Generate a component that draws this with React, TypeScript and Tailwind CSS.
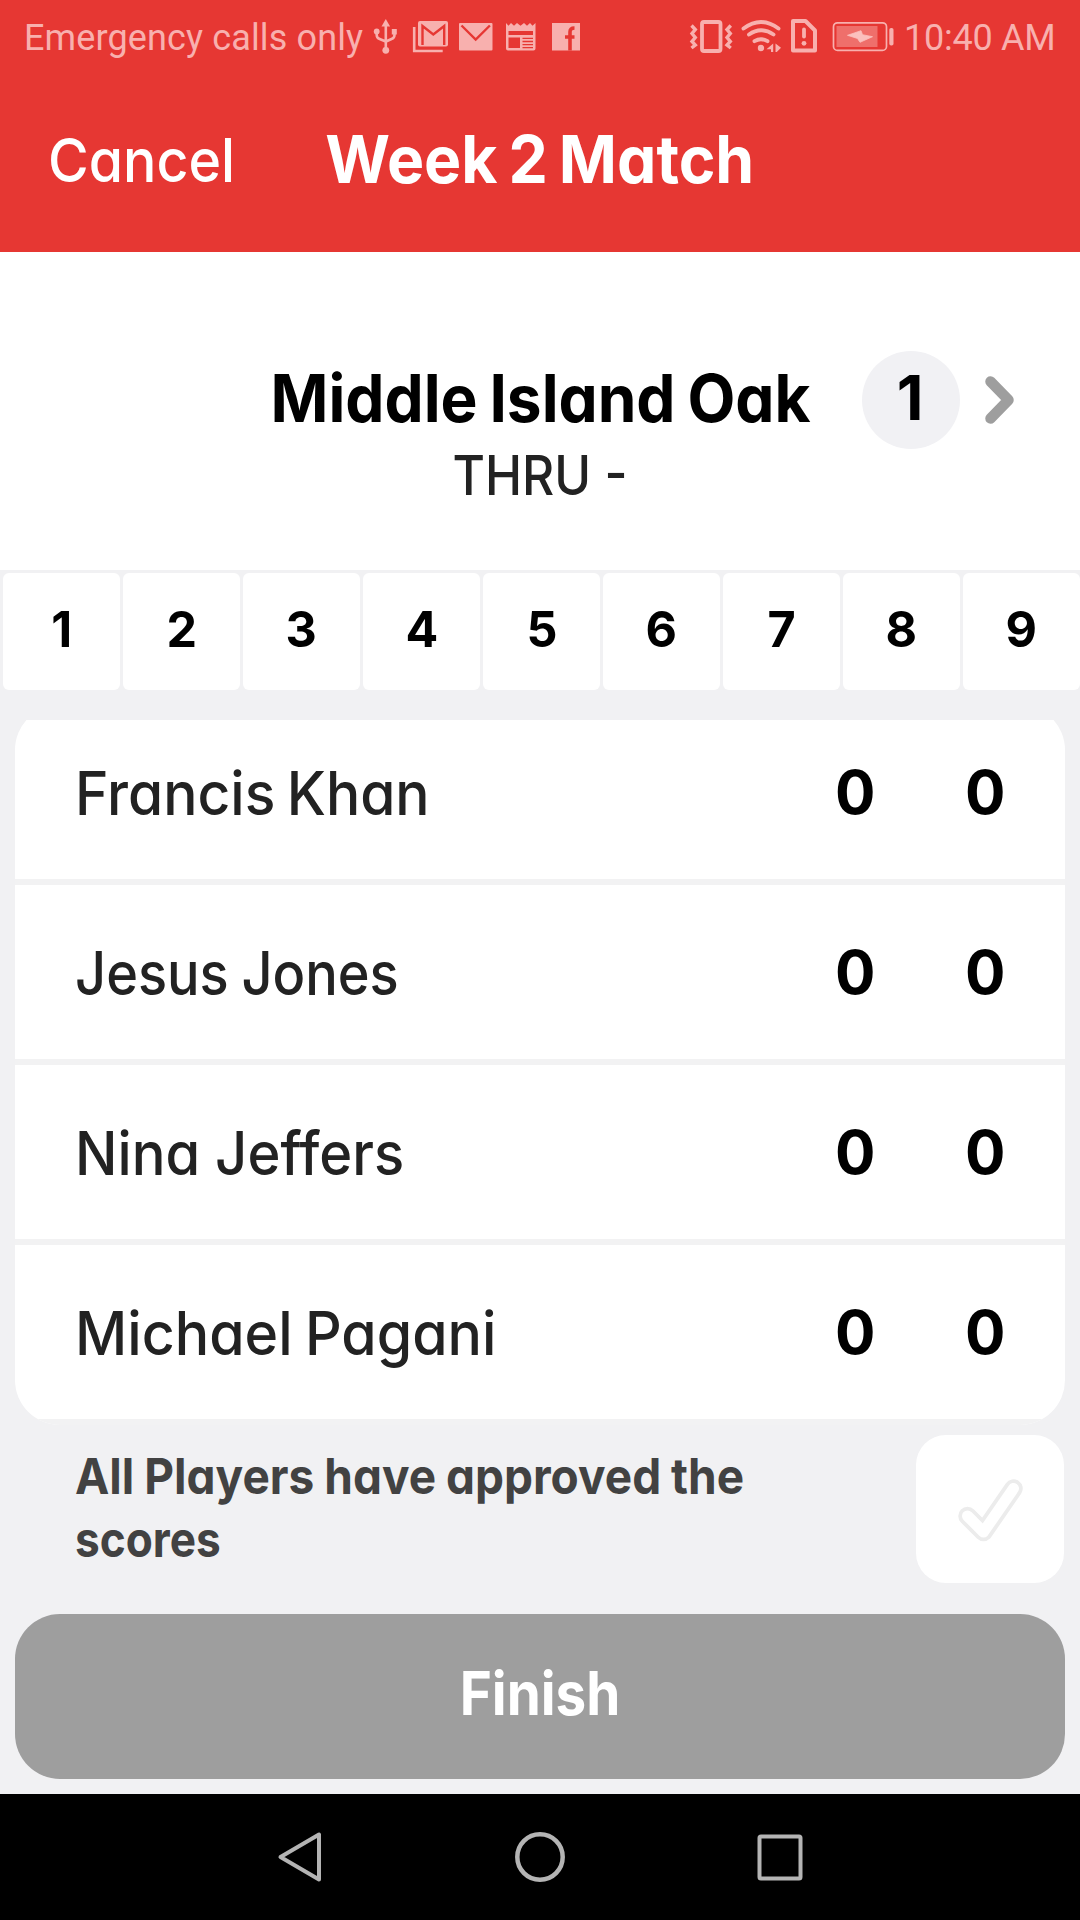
import type { ReactNode } from "react";

const RED = "#e63733";
const TINT = "#f8b0ae";

const holes = [1, 2, 3, 4, 5, 6, 7, 8, 9];

const players = [
  { name: "Francis Khan", fit: "scale-x-[0.949] [word-spacing:-4px]", scores: [0, 0] },
  { name: "Jesus Jones", fit: "scale-x-[0.902] [word-spacing:-2px]", scores: [0, 0] },
  { name: "Nina Jeffers", fit: "scale-x-[0.936]", scores: [0, 0] },
  { name: "Michael Pagani", fit: "scale-x-[0.954] [word-spacing:-3px]", scores: [0, 0] },
];

function StatusIcon({ x, width, className, children }: { x: number; width: number; className?: string; children: ReactNode }) {
  return (
    <svg className={`shrink-0 ${className ?? ""}`} width={width} height={76} viewBox={`${x} 0 ${width} 76`} fill="none">
      {children}
    </svg>
  );
}

function StatusBar() {
  return (
    <div className="flex h-[76px] items-center font-['Roboto',sans-serif] text-[36px] leading-[76px] text-[#f8b0ae]">
      <span className="w-[350px] shrink-0 whitespace-nowrap pl-6 tracking-[0.130px]">Emergency calls only</span>
      <StatusIcon x={372} width={28} className="ml-[22px]">
        <path d="M385.800 24V49M376.700 32v3q0 3 3 4l6 2.500M394.500 32v3q0 3-3 4l-5.500 2.500" stroke={TINT} strokeWidth="2.600" />
        <path d="M385.800 19l4.300 7.500h-8.600z" fill={TINT} />
        <circle cx="385.800" cy="50.300" r="3.400" fill={TINT} />
        <circle cx="376.700" cy="31.500" r="2.900" fill={TINT} />
        <rect x="391.800" y="29" width="5" height="5.500" fill={TINT} />
      </StatusIcon>
      <StatusIcon x={411} width={39} className="ml-[11px]">
        <path d="M414.200 27v24h28.500" stroke={TINT} strokeWidth="2.600" />
        <rect x="418" y="21" width="30" height="25.500" rx="2" fill={TINT} />
        <path d="M422.500 45V26l10.800 8.500L444.200 26v19" stroke={RED} strokeWidth="2.400" />
      </StatusIcon>
      <StatusIcon x={458} width={36} className="ml-[8px]">
        <rect x="459" y="23" width="33.500" height="27.500" rx="1" fill={TINT} />
        <path d="M461.500 25.500l14.200 14 14.200-14" stroke={RED} strokeWidth="2.400" />
      </StatusIcon>
      <StatusIcon x={505} width={32} className="ml-[11px]">
        <path
          d="M506 23l2.500 2.700L511 23l3 2.700L517 23l3.500 2.700L524 23l3 2.700L530 23l2.500 2.700L535.500 23v25.500a2 2 0 0 1-2 2H508a2 2 0 0 1-2-2z"
          fill={TINT}
        />
        <path d="M508.500 31h24.500v4h-24.500zM508.500 37.500h11.500v10.500h-11.500z" fill={RED} />
        <path d="M522.500 38.300h10.500M522.500 41.500h10.500M522.500 44.600h10.500M522.500 47.600h10.500" stroke={RED} strokeWidth="1.300" />
      </StatusIcon>
      <StatusIcon x={551} width={30} className="ml-[14px]">
        <rect x="552" y="23" width="28" height="27.500" fill={TINT} />
        <path d="M570 50.500V32q0-4 4.500-4M565 37h9.500" stroke={RED} strokeWidth="3.600" />
      </StatusIcon>
      <StatusIcon x={688} width={46} className="ml-[107px]">
        <rect x="702" y="22" width="18.500" height="29" rx="2" stroke={TINT} strokeWidth="3.800" />
        <path
          d="M691.500 25.500l3.800 4-3.300 4 3.300 4-3.300 4 3.300 3.500-3.800 3M730.800 25.500l-3.800 4 3.300 4-3.300 4 3.300 4-3.300 3.500 3.800 3"
          stroke={TINT}
          strokeWidth="3.400"
        />
      </StatusIcon>
      <StatusIcon x={740} width={42} className="ml-[6px]">
        <path d="M743.500 28.500q17.500-13 35 0M749 34.500q12-8.500 24.500 0M754.500 41.200q6.500-4 13 0" stroke={TINT} strokeWidth="3.900" strokeLinecap="round" />
        <circle cx="761" cy="48" r="3.200" fill={TINT} />
        <path d="M773.200 43.500v8.500h-2.200v-2.700h-4.500zM775.500 43.500l5.500 4.200-4.200 4.300h-1.300z" fill={TINT} />
      </StatusIcon>
      <StatusIcon x={789} width={30} className="ml-[7px]">
        <path d="M793 21h12.500l9.500 9.500v20h-22z" stroke={TINT} strokeWidth="4" strokeLinejoin="round" />
        <path d="M804 29.500v7" stroke={TINT} strokeWidth="3.800" strokeLinecap="round" />
        <circle cx="804" cy="43.300" r="2.400" fill={TINT} />
      </StatusIcon>
      <StatusIcon x={831} width={64} className="ml-[12px]">
        <rect x="833.500" y="22.800" width="53" height="27.600" rx="4" stroke={TINT} strokeWidth="1.700" />
        <rect x="836.500" y="26" width="41" height="21" fill="#ef6f6b" />
        <path d="M847.500 35.300L861 30.700L862.500 34.700L872.500 36.700L860 42.300L857.500 38.500Z" fill="#fbc0be" stroke="#fbc0be" strokeWidth="0.800" />
        <rect x="889.300" y="28" width="4.200" height="17.500" rx="1.800" fill={TINT} />
      </StatusIcon>
      <span className="ml-[9px] whitespace-nowrap tracking-[-0.250px]">10:40 AM</span>
    </div>
  );
}

function Header() {
  return (
    <header className="h-[252px] bg-[#e63733]">
      <StatusBar />
      <div className="grid h-[168px] grid-cols-[1fr_auto_1fr] items-center whitespace-nowrap text-white">
        <button className="flex pl-12 text-[60px] font-[450]">
          <span className="origin-left scale-x-[0.925]">Cancel</span>
        </button>
        <h1 className="scale-x-[0.946] pb-[2px] text-[66px] font-bold [word-spacing:-4px]">Week 2 Match</h1>
      </div>
    </header>
  );
}

function CourseSummary() {
  return (
    <section className="flex h-[318px] flex-col pt-[99px]">
      <div className="grid h-[98px] grid-cols-[1fr_auto_1fr] items-center">
        <span />
        <h2 className="ml-[2px] scale-x-[0.949] whitespace-nowrap pb-[2px] text-[65.500px] font-bold leading-[96px] [word-spacing:-3px]">Middle Island Oak</h2>
        <div className="flex items-center justify-end gap-[25px] pr-[65px]">
          <div className="flex size-[98px] shrink-0 items-center justify-center rounded-full bg-[#f1f1f4] pb-[5px] pr-[2px] text-[62px] font-bold leading-none">
            1
          </div>
          <svg className="shrink-0" width="30" height="50" viewBox="0 0 30 50" fill="none">
            <path d="M5.500 6.500L23.500 25 5.500 43.500" stroke="#9e9e9e" strokeWidth="10.500" strokeLinecap="round" strokeLinejoin="round" />
          </svg>
        </div>
      </div>
      <p className="scale-x-[0.913] text-center text-[54.500px] font-[450] leading-[53px] text-[#222222]">THRU -</p>
    </section>
  );
}

function HoleTabs() {
  return (
    <nav className="grid h-[120px] grid-cols-9 gap-[3px] pl-[3px] pt-[3px]">
      {holes.map((hole) => (
        <button key={hole} className="flex items-center justify-center rounded-md bg-white pb-[5px] text-[50px] font-bold leading-none">
          <span className="scale-x-[0.970]">{hole}</span>
        </button>
      ))}
    </nav>
  );
}

function Scorecard() {
  return (
    <div className="mx-[15px] mt-[30px] flex h-[705px] flex-col justify-end overflow-hidden">
      <ul className="shrink-0 overflow-hidden rounded-[45px] bg-white">
        {players.map((player) => (
          <li key={player.name} className="flex h-[180px] items-center border-b-[6px] border-[#f2f2f3] px-[60px] text-[60px] leading-none">
            <span className={`origin-left pt-[2px] font-[450] text-[#222222] ${player.fit}`}>{player.name}</span>
            <span className="ml-auto flex gap-[90px] font-bold">
              {player.scores.map((score, i) => (
                <span key={i} className="w-10 text-center">{score}</span>
              ))}
            </span>
          </li>
        ))}
      </ul>
    </div>
  );
}

function Approval() {
  return (
    <div className="mt-[10px] flex justify-between pl-[75px] pr-4">
      <p className="pt-[10px] text-[50px] font-bold leading-[63px] text-[#424242]">
        <span className="block w-max origin-left scale-x-[0.920] [word-spacing:-1px]">All Players have approved the</span>
        <span className="block w-max origin-left scale-x-[0.884]">scores</span>
      </p>
      <button className="size-[148px] shrink-0 rounded-[30px] bg-white">
        <svg width="148" height="148" viewBox="0 0 148 148" fill="none" strokeLinecap="round" strokeLinejoin="round">
          <path d="M51.500 81l16 16 30-43.500" stroke="#ececec" strokeWidth="18.500" />
          <path d="M51.500 81l16 16 30-43.500" stroke="#ffffff" strokeWidth="11" />
        </svg>
      </button>
    </div>
  );
}

function SystemNav() {
  return (
    <nav className="flex h-[126px] items-center justify-center gap-[188px] bg-black">
      <svg width="52" height="52" viewBox="0 0 52 52" fill="none" stroke="#b4b4b4" strokeWidth="4" strokeLinejoin="round">
        <path d="M45 3.500v45L6.500 26z" />
      </svg>
      <svg width="52" height="52" viewBox="0 0 52 52" fill="none" stroke="#b4b4b4" strokeWidth="4.500">
        <circle cx="26" cy="26" r="22.700" />
      </svg>
      <svg width="52" height="52" viewBox="0 0 52 52" fill="none" stroke="#b4b4b4" strokeWidth="4">
        <rect x="5.500" y="5.500" width="41" height="42" rx="1.500" />
      </svg>
    </nav>
  );
}

export default function App() {
  return (
    <div className="flex h-[1920px] w-[1080px] flex-col overflow-hidden bg-white font-['Inter',sans-serif] text-black [font-feature-settings:'cv11']">
      <Header />
      <CourseSummary />
      <main className="flex flex-1 flex-col bg-[#f1f1f3]">
        <HoleTabs />
        <Scorecard />
        <Approval />
        <button className="mx-[15px] mt-[31px] flex h-[165px] items-center justify-center rounded-[45px] bg-[#9e9e9e] pb-[7px] text-[60px] font-bold leading-none text-white">
          <span className="scale-x-[0.913]">Finish</span>
        </button>
      </main>
      <SystemNav />
    </div>
  );
}
